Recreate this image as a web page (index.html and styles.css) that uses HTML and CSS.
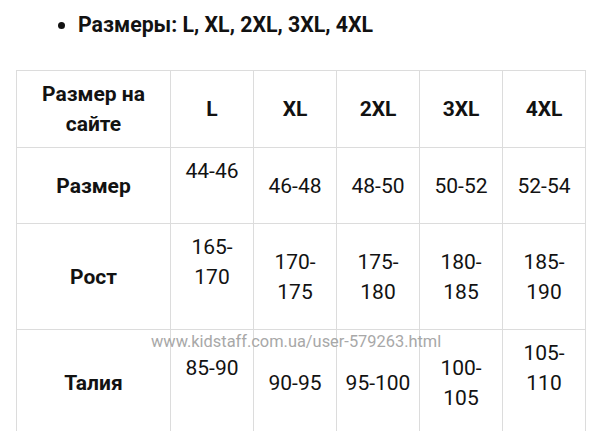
FILE: index.html
```html
<!DOCTYPE html>
<html lang="ru">
<head>
<meta charset="utf-8">
<title>Размеры</title>
<link rel="stylesheet" href="styles.css">
</head>
<body>
<div class="page">
  <ul class="list">
    <li>Размеры: L, XL, 2XL, 3XL, 4XL</li>
  </ul>
  <table class="sizes">
    <colgroup>
      <col class="c-label">
      <col class="c-size">
      <col class="c-size">
      <col class="c-size">
      <col class="c-size">
      <col class="c-size">
    </colgroup>
    <tr class="head">
      <th>Размер на сайте</th>
      <th>L</th>
      <th>XL</th>
      <th>2XL</th>
      <th>3XL</th>
      <th>4XL</th>
    </tr>
    <tr>
      <th>Размер</th>
      <td>44-46<br>&nbsp;</td>
      <td>46-48</td>
      <td>48-50</td>
      <td>50-52</td>
      <td>52-54</td>
    </tr>
    <tr>
      <th>Рост</th>
      <td>165-170<br>&nbsp;</td>
      <td>170-175</td>
      <td>175-180</td>
      <td>180-185</td>
      <td>185-190</td>
    </tr>
    <tr>
      <th>Талия</th>
      <td>85-90<br>&nbsp;</td>
      <td>90-95</td>
      <td>95-100</td>
      <td>100-105</td>
      <td>105-110<br>&nbsp;</td>
    </tr>
  </table>
  <div class="watermark">www.kidstaff.com.ua/user-579263.html</div>
</div>
</body>
</html>
```
FILE: styles.css
```css
html, body {
  margin: 0;
  padding: 0;
  background: #ffffff;
}
body {
  font-family: Roboto, "Liberation Sans", sans-serif;
  color: #121212;
  font-size: 21px;
  line-height: 30px;
}
.page {
  position: relative;
  padding: 10px 0 0 16px;
}
.list {
  margin: 0 0 30px 0;
  padding: 0 0 0 62px;
  font-weight: 700;
  font-size: 21.3px;
}
.sizes {
  border-collapse: collapse;
  table-layout: fixed;
  width: 568px;
}
.c-label { width: 154px; }
.c-size { width: 83px; }
.sizes th,
.sizes td {
  border: 1px solid #dcdcdc;
  padding: 8px 8px;
  text-align: center;
  vertical-align: middle;
  font-size: 21px;
  line-height: 30px;
}
.sizes tr + tr th,
.sizes tr + tr td {
  padding-top: 7.5px;
  padding-bottom: 7.5px;
}
.sizes th { font-weight: 700; }
.sizes td { font-weight: 400; }
.watermark {
  position: absolute;
  left: 151px;
  top: 331px;
  font-size: 16.4px;
  line-height: 22px;
  color: #a8a8a8;
  white-space: nowrap;
}
```
